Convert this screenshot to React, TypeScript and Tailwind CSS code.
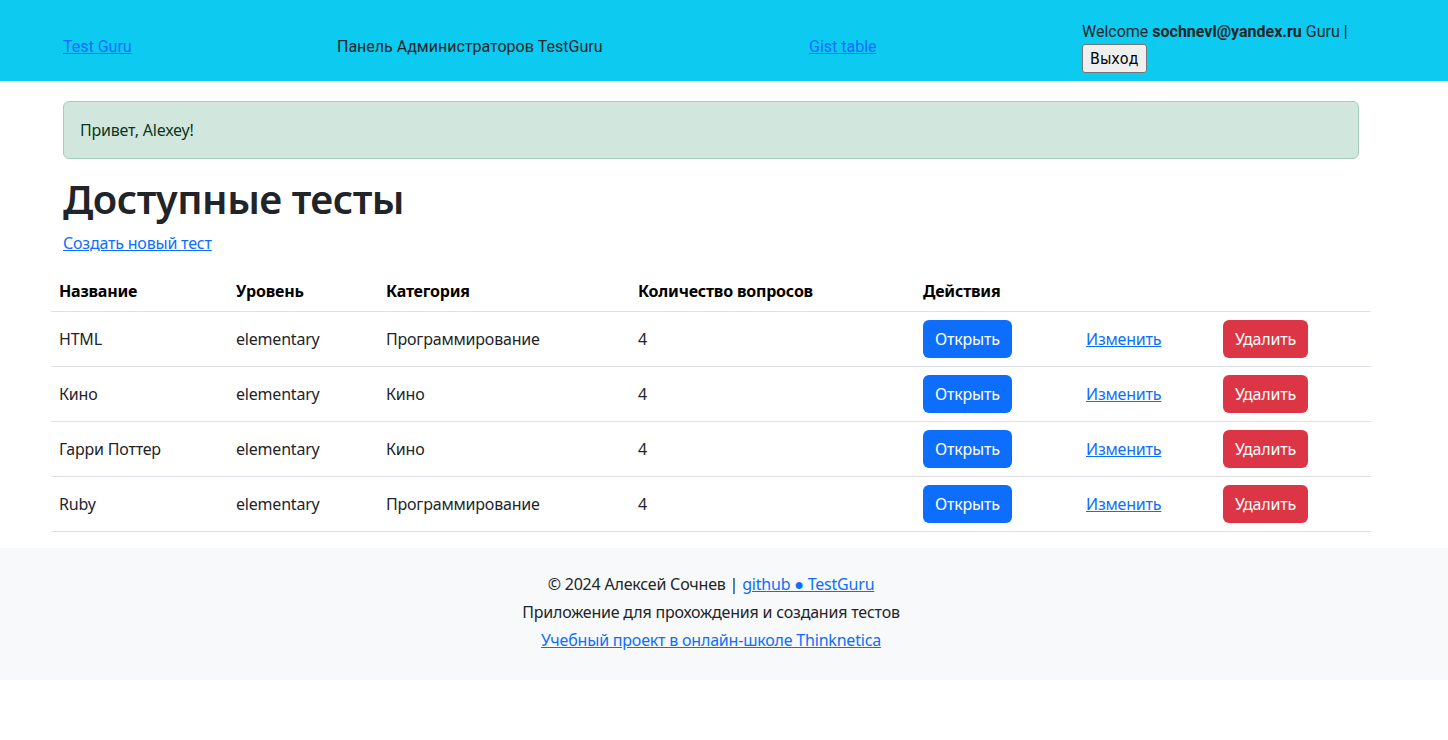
const tests = [
  { title: "HTML", level: "elementary", category: "Программирование", count: 4 },
  { title: "Кино", level: "elementary", category: "Кино", count: 4 },
  { title: "Гарри Поттер", level: "elementary", category: "Кино", count: 4 },
  { title: "Ruby", level: "elementary", category: "Программирование", count: 4 },
];

export default function App() {
  return (
    <div className="min-h-[740px] bg-white text-[16px] leading-6 text-[#212529] font-['Noto_Sans',sans-serif] tracking-[-0.2px]">
      {/* Header */}
      <header className="h-[81px] bg-[#0dcaf0] pt-3 font-['Roboto',sans-serif] tracking-normal">
        <div className="ml-[63px] flex h-full items-center">
          <div className="w-[274px]">
            <a href="#" className="text-[#0d6efd] underline">Test Guru</a>
          </div>
          <div className="w-[472px]">Панель Администраторов TestGuru</div>
          <div className="w-[273px]">
            <a href="#" className="text-[#0d6efd] underline">Gist table</a>
          </div>
          <div className="w-[280px]">
            <div>
              Welcome <b>sochnevl@yandex.ru</b> Guru |
            </div>
            <button className="h-[29px] rounded-[3px] border border-[#767676] bg-[#efefef] px-[7px] text-[16px] leading-none text-black font-['DejaVu_Sans_Condensed','Liberation_Sans',sans-serif]">
              Выход
            </button>
          </div>
        </div>
      </header>

      {/* Main */}
      <main className="ml-[51px] w-[1320px] pt-5">
        <div className="px-3">
          <div className="rounded-md border border-[#a3cfbb] bg-[#d1e7dd] p-4 text-[#0a3622]">
            Привет, Alexey!
          </div>
          <h1 className="mt-[16px] mb-2 text-[40px] font-semibold leading-[48px] tracking-[-0.5px]">Доступные тесты</h1>
          <a href="#" className="text-[#0d6efd] underline">Создать новый тест</a>
        </div>

        <table className="mt-4 mb-4 w-[1320px] border-collapse text-left">
          <thead>
            <tr className="border-b border-[#dee2e6] text-black">
              <th className="w-[177px] p-2 font-bold">Название</th>
              <th className="w-[150px] p-2 font-bold">Уровень</th>
              <th className="w-[252px] p-2 font-bold">Категория</th>
              <th className="w-[285px] p-2 font-bold">Количество вопросов</th>
              <th className="w-[163px] p-2 font-bold">Действия</th>
              <th className="w-[137px] p-2"></th>
              <th className="p-2"></th>
            </tr>
          </thead>
          <tbody>
            {tests.map((t) => (
              <tr key={t.title} className="border-b border-[#dee2e6]">
                <td className="p-2">{t.title}</td>
                <td className="p-2">{t.level}</td>
                <td className="p-2">{t.category}</td>
                <td className="p-2">{t.count}</td>
                <td className="p-2">
                  <button className="h-[38px] rounded-md bg-[#0d6efd] px-3 text-white">Открыть</button>
                </td>
                <td className="p-2">
                  <a href="#" className="text-[#0d6efd] underline">Изменить</a>
                </td>
                <td className="p-2">
                  <button className="h-[38px] rounded-md bg-[#dc3545] px-3 text-white">Удалить</button>
                </td>
              </tr>
            ))}
          </tbody>
        </table>
      </main>

      {/* Footer */}
      <footer className="bg-[#f8f9fa] pt-6 pb-7 pr-[26px] text-center">
        <p className="mb-1">
          © 2024 Алексей Сочнев | <a href="#" className="text-[#0d6efd] underline">github ● TestGuru</a>
        </p>
        <p className="mb-1">Приложение для прохождения и создания тестов</p>
        <p>
          <a href="#" className="text-[#0d6efd] underline">Учебный проект в онлайн-школе Thinknetica</a>
        </p>
      </footer>
    </div>
  );
}
